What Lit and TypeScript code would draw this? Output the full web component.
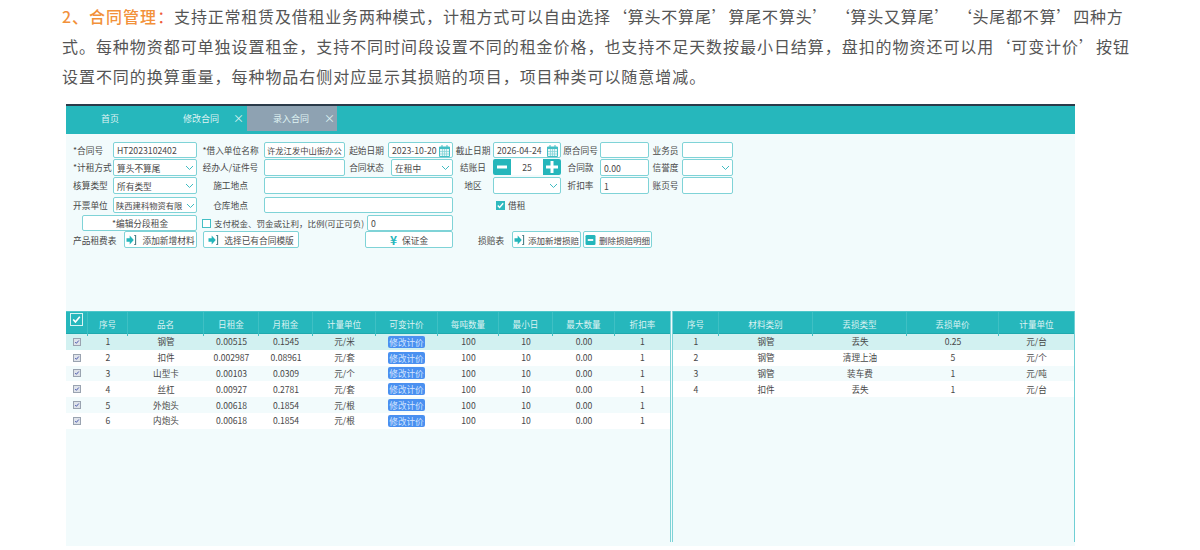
import { LitElement, html, css, svg } from 'lit';
import { customElement } from 'lit/decorators.js';

const leftCols = ['', '序号', '品名', '日租金', '月租金', '计量单位', '可变计价', '每吨数量', '最小日', '最大数量', '折扣率'];
const leftRows = [
  ['1', '钢管', '0.00515', '0.1545', '元/米'],
  ['2', '扣件', '0.002987', '0.08961', '元/套'],
  ['3', '山型卡', '0.00103', '0.0309', '元/个'],
  ['4', '丝杠', '0.00927', '0.2781', '元/套'],
  ['5', '外炮头', '0.00618', '0.1854', '元/根'],
  ['6', '内炮头', '0.00618', '0.1854', '元/根'],
];
const rightCols = ['序号', '材料类别', '丢损类型', '丢损单价', '计量单位'];
const rightRows = [
  ['1', '钢管', '丢失', '0.25', '元/台'],
  ['2', '钢管', '清理上油', '5', '元/个'],
  ['3', '钢管', '装车费', '1', '元/吨'],
  ['4', '扣件', '丢失', '1', '元/台'],
];

const chevron = html`<svg class="chev" viewBox="0 0 9 6"><path d="M1 1l3.5 3.5L8 1" fill="none" stroke="#3fbcc2" stroke-width="1"/></svg>`;
const calendar = html`<svg class="cal" viewBox="0 0 11 12">
  <path d="M0.5 2h10v9.5h-10z" fill="#e4f6f7" stroke="#45bfc5" stroke-width="1"/>
  <path d="M0.5 2h10v2h-10z" fill="#45bfc5"/>
  <path d="M3 0v2.500M8 0v2.500" stroke="#45bfc5" stroke-width="1"/>
  <path d="M3.5 4v7M5.5 4v7M7.5 4v7M1 6.500h9M1 9h9" stroke="#7fd2d6" stroke-width="0.7"/>
</svg>`;
const arrow = html`<svg class="ico" viewBox="0 0 12 11">
  <path d="M0.500 3.500h3.500V0.500l4.500 5-4.500 5v-3h-3.500z" fill="#25b6bb"/>
  <path d="M9 0.500h1.500v10H9" fill="none" stroke="#4c7f86" stroke-width="1.200"/>
</svg>`;
const minusBox = html`<svg class="ico" viewBox="0 0 11 11"><rect width="11" height="11" rx="1.500" fill="#25b6bb"/><path d="M2.500 5.500h6" stroke="#fff" stroke-width="2"/></svg>`;
const stepMinus = html`<svg class="step" viewBox="0 0 18 16"><rect width="18" height="16" fill="#25b6bb"/><path d="M4 8h10" stroke="#fff" stroke-width="3"/></svg>`;
const stepPlus = html`<svg class="step" viewBox="0 0 18 16"><rect width="18" height="16" fill="#25b6bb"/><path d="M3 8h12M9 2v12" stroke="#fff" stroke-width="3"/></svg>`;
const tick = svg`<path d="M2 5l2 2.200L8 2.500" fill="none" stroke-width="1.500"/>`;

@customElement('app-root')
export class AppRoot extends LitElement {
  static styles = css`
    :host {
      display: block;
      width: 1200px;
      height: 550px;
      overflow: hidden;
      background: #fff;
      font-family: 'Noto Sans CJK SC', 'Noto Sans', sans-serif;
    }

    .intro {
      margin: 0;
      padding: 1px 0 0 62px;
      height: 104px;
      box-sizing: border-box;
      font-size: 16px;
      letter-spacing: 0.95px;
      line-height: 30px;
      color: #555;
      white-space: nowrap;
    }
    .intro b { color: #f2913a; font-weight: 500; letter-spacing: 1px; }
    .intro i { color: #ef5b3c; font-style: normal; }
    .intro .lead { letter-spacing: 0.8px; }

    .shot {
      margin-left: 66px;
      width: 1009px;
      height: 440px;
      border-top: 2px solid #2a3a49;
      background: #f2fbfc;
      font-size: 8.700px;
      color: #484848;
    }

    .tabs {
      display: flex;
      height: 28px;
      background: #26b7bc;
      color: #dff3f3;
      box-sizing: border-box;
      padding-bottom: 3px;
      font-size: 9px;
    }
    .tab { display: flex; align-items: center; height: 25px; }
    .tab.home { width: 98px; padding-left: 35px; box-sizing: border-box; }
    .tab.edit { width: 83px; padding-left: 19px; box-sizing: border-box; gap: 14px; }
    .tab.active { width: 90px; padding-left: 26px; box-sizing: border-box; gap: 15px; background: #8ea2b2; }
    .tab span { font-size: 11px; line-height: 1; }

    .form { height: 177px; box-sizing: border-box; padding-top: 8px; }
    .grid {
      display: grid;
      grid-template-columns: 47px 84px 67px 81px 43px 65px 40px 68px 39px 49px 33px 51px;
      grid-template-rows: 17px 18px 20px 17px;
    }
    .lb { text-align: center; line-height: 17px; white-space: nowrap; }
    .lb.first { text-align: left; padding-left: 7px; }

    .in {
      display: flex;
      align-items: center;
      justify-content: space-between;
      box-sizing: border-box;
      height: 16px;
      padding: 1px 2px 0 3px;
      background: #fff;
      border: 1px solid #7fd3d7;
      border-radius: 2px;
      white-space: nowrap;
      overflow: hidden;
      line-height: 13px;
    }
    .in.tall { height: 17px; }
    .in.tight { font-size: 8.300px; padding-left: 2px; padding-right: 1px; }
    .wide { grid-column: span 3; }
    .status { margin-left: 3px; }
    .chev { width: 9px; height: 6px; flex: none; }
    .cal { width: 11px; height: 12px; flex: none; }

    .stepper {
      display: flex;
      align-items: center;
      justify-content: space-between;
      height: 16px;
      background: #fff;
      border-radius: 2px;
      overflow: hidden;
    }
    .step { width: 18px; height: 16px; flex: none; }

    .check {
      display: flex;
      align-items: center;
      gap: 3px;
      padding-left: 3px;
      line-height: 15px;
    }
    .box {
      width: 9px;
      height: 9px;
      flex: none;
      box-sizing: border-box;
      background: #2fb9be;
      stroke: #fff;
    }
    .box.off { background: #fff; border: 1px solid #45bfc5; }

    .flow { display: flex; align-items: center; height: 17px; }
    .in.center, .btn {
      display: flex;
      align-items: center;
      justify-content: center;
      box-sizing: border-box;
      height: 16px;
      background: #fff;
      border: 1px solid #7fd3d7;
      border-radius: 2px;
      white-space: nowrap;
    }
    .btn { height: 17px; gap: 5px; padding-top: 1px; }
    .ico { width: 11px; height: 10px; flex: none; }
    .seg-btn { width: 115px; margin-left: 16px; }
    .tax { width: 165px; margin-left: 5px; display: flex; align-items: center; gap: 3px; white-space: nowrap; font-size: 8.500px; padding-top: 1px; box-sizing: border-box; }
    .ratio { width: 86px; }
    .product { width: 58px; padding-left: 7px; box-sizing: border-box; white-space: nowrap; padding-top: 2px; }
    .b73 { width: 73px; }
    .b96 { width: 96px; margin-left: 6px; }
    .deposit { width: 88px; margin-left: 66px; gap: 5px; }
    .deposit em { color: #25b6bb; font-style: normal; font-weight: 700; font-size: 12px; line-height: 1; }
    .damage { width: 25px; margin: 0 9px 0 25px; white-space: nowrap; padding-top: 2px; }
    .b69 { width: 69px; gap: 3px; font-size: 8.500px; }
    .b69.del { margin-left: 2px; }

    .tables { display: flex; height: 233px; }
    .panel { box-sizing: border-box; }
    .panel.left { width: 605px; border-right: 1px solid #7fd3d7; }
    .panel.right { width: 403px; margin-left: 1px; border-left: 1px solid #7fd3d7; border-right: 1px solid #6fcfd4; }

    .row { display: grid; height: 15.800px; align-items: center; text-align: center; line-height: 15px; font-size: 8.600px; }
    .left .row { grid-template-columns: 22px 40px 76px 55px 54px 63px 62px 61px 54px 62px 55px; }
    .right .row { grid-template-columns: 46px 94px 94px 92px 75px; }
    .row:nth-child(even) { background: #f2fbfc; }
    .row:nth-child(odd) { background: #fff; }
    .row.on { background: #d2f1f1; }
    .row.head {
      height: 23px;
      box-sizing: border-box;
      background: #26b7bc;
      color: #dcf2f2;
      border-top: 1px solid #4cc6ca;
      border-bottom: 1px solid #1fa9ae;
      align-items: stretch;
      line-height: 24px;
    }
    .head > div { border-right: 1px solid #3fc0c4; }
    .head > div:last-child { border-right: 0; }
    .all {
      display: flex;
      align-items: flex-start;
      justify-content: center;
    }
    .all svg { width: 13px; height: 13px; margin-top: 1px; background: #26b7bc; border: 1px solid #d8f3f3; box-sizing: border-box; stroke: #fff; }
    .tick { display: flex; justify-content: center; }
    .tick svg { width: 8px; height: 8px; background: #dfe3ea; border: 1px solid #9aa3b0; box-sizing: border-box; stroke: #3f4fa8; }
    .mod {
      display: block;
      width: 37px;
      height: 12px;
      margin-left: 12px;
      background: #4a90f0;
      color: #d5e6ff;
      border-radius: 2px;
      line-height: 12px;
      font-size: 8.600px;
    }
    .tables { height: 231px; }
  `;

  private renderField(label: string, body: unknown, first = false) {
    return html`<div class="lb ${first ? 'first' : ''}">${label}</div>${body}`;
  }

  private renderForm() {
    return html`
      <div class="form">
        <div class="grid">
          ${this.renderField('*合同号', html`<div class="in">HT2023102402</div>`, true)}
          ${this.renderField('*借入单位名称', html`<div class="in tight">许龙江发中山街办公</div>`)}
          ${this.renderField('起始日期', html`<div class="in">2023-10-20${calendar}</div>`)}
          ${this.renderField('截止日期', html`<div class="in">2026-04-24${calendar}</div>`)}
          ${this.renderField('原合同号', html`<div class="in"></div>`)}
          ${this.renderField('业务员', html`<div class="in"></div>`)}

          ${this.renderField('*计租方式', html`<div class="in tall">算头不算尾${chevron}</div>`, true)}
          ${this.renderField('经办人/证件号', html`<div class="in tall"></div>`)}
          ${this.renderField('合同状态', html`<div class="in tall status">在租中${chevron}</div>`)}
          ${this.renderField('结账日', html`<div class="stepper">${stepMinus}25${stepPlus}</div>`)}
          ${this.renderField('合同款', html`<div class="in tall">0.00</div>`)}
          ${this.renderField('信誉度', html`<div class="in tall"><span></span>${chevron}</div>`)}

          ${this.renderField('核算类型', html`<div class="in tall">所有类型${chevron}</div>`, true)}
          ${this.renderField('施工地点', html`<div class="in tall wide"></div>`)}
          ${this.renderField('地区', html`<div class="in tall"><span></span>${chevron}</div>`)}
          ${this.renderField('折扣率', html`<div class="in tall">1</div>`)}
          ${this.renderField('账页号', html`<div class="in tall"></div>`)}

          ${this.renderField('开票单位', html`<div class="in tight">陕西建科物资有限${chevron}</div>`, true)}
          ${this.renderField('仓库地点', html`<div class="in wide"></div>`)}
          <div></div>
          <div class="check"><svg class="box" viewBox="0 0 10 10">${tick}</svg>借租</div>
        </div>

        <div class="flow">
          <div class="in center seg-btn">*编辑分段租金</div>
          <div class="tax"><svg class="box off" viewBox="0 0 10 10"></svg>支付税金、罚金或让利，比例(可正可负)</div>
          <div class="in ratio">0</div>
        </div>

        <div class="flow">
          <div class="product">产品租费表</div>
          <div class="btn b73">${arrow}添加新增材料</div>
          <div class="btn b96">${arrow}选择已有合同模版</div>
          <div class="btn deposit"><em>¥</em>保证金</div>
          <div class="damage">损赔表</div>
          <div class="btn b69">${arrow}添加新增损赔</div>
          <div class="btn b69 del">${minusBox}删除损赔明细</div>
        </div>
      </div>
    `;
  }

  private renderTables() {
    return html`
      <div class="tables">
        <div class="panel left">
          <div class="row head">
            ${leftCols.map((c, i) =>
              i === 0
                ? html`<div class="all"><svg viewBox="0 0 10 10">${tick}</svg></div>`
                : html`<div>${c}</div>`)}
          </div>
          ${leftRows.map((r, i) => html`
            <div class="row ${i === 0 ? 'on' : ''}">
              <div class="tick"><svg viewBox="0 0 10 10">${tick}</svg></div>
              ${r.map((v) => html`<div>${v}</div>`)}
              <div><span class="mod">修改计价</span></div>
              <div>100</div><div>10</div><div>0.00</div><div>1</div>
            </div>
          `)}
        </div>
        <div class="panel right">
          <div class="row head">${rightCols.map((c) => html`<div>${c}</div>`)}</div>
          ${rightRows.map((r, i) => html`
            <div class="row ${i === 0 ? 'on' : ''}">${r.map((v) => html`<div>${v}</div>`)}</div>
          `)}
        </div>
      </div>
    `;
  }

  render() {
    return html`
      <p class="intro">
        <b>2、合同管理</b><i>：</i><span class="lead">支持正常租赁及借租业务两种模式，计租方式可以自由选择‘算头不算尾’算尾不算头’ ‘算头又算尾’ ‘头尾都不算’四种方</span><br />
        式。每种物资都可单独设置租金，支持不同时间段设置不同的租金价格，也支持不足天数按最小日结算，盘扣的物资还可以用‘可变计价’按钮<br />
        设置不同的换算重量，每种物品右侧对应显示其损赔的项目，项目种类可以随意增减。
      </p>
      <div class="shot">
        <div class="tabs">
          <div class="tab home">首页</div>
          <div class="tab edit">修改合同<span>×</span></div>
          <div class="tab active">录入合同<span>×</span></div>
        </div>
        ${this.renderForm()}
        ${this.renderTables()}
      </div>
    `;
  }
}
